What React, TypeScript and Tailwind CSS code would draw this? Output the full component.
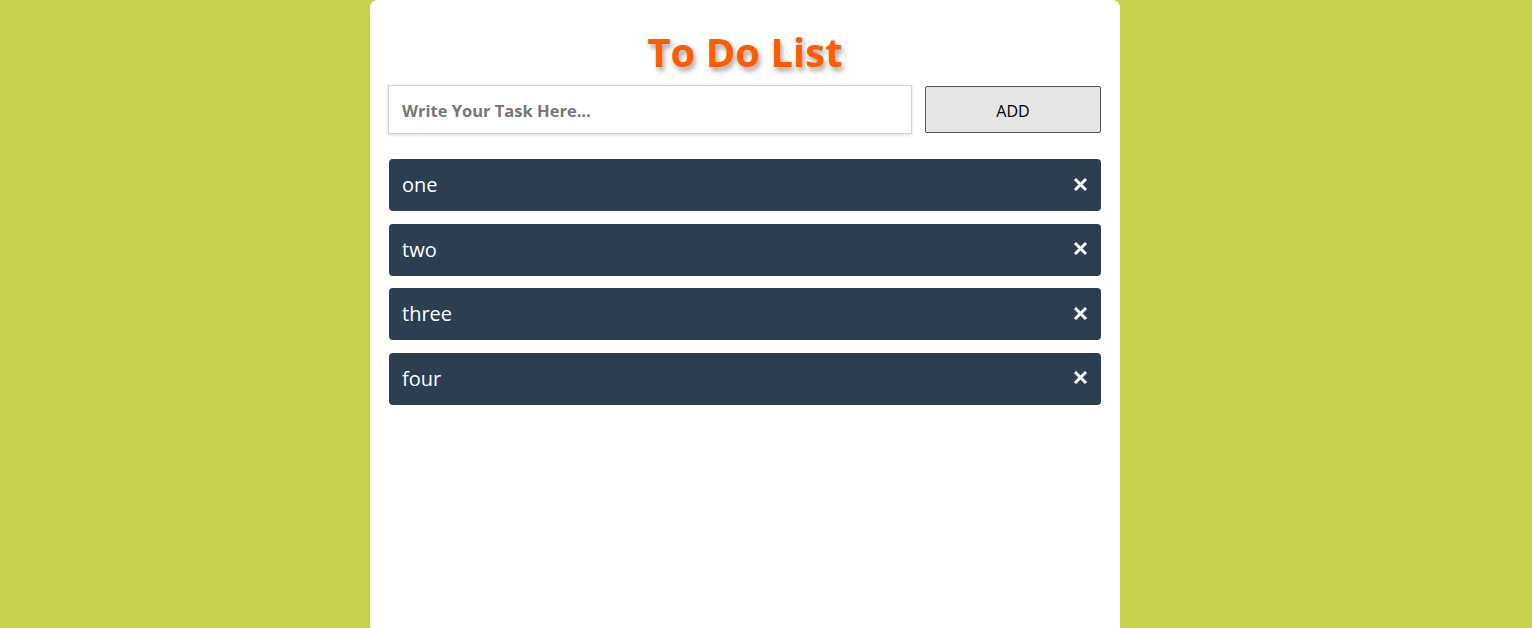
import React from "react";

const items = ["one", "two", "three", "four"];

function XIcon() {
  return (
    <svg width="15" height="15" viewBox="0 0 15 15" className="block -mt-[2px]">
      <path d="M2 2 L13 13 M13 2 L2 13" stroke="white" strokeWidth="3" strokeLinecap="butt" />
    </svg>
  );
}

export default function App() {
  return (
    <div className="min-h-[628px] h-[628px] w-full bg-[#c8d14f] flex justify-center pr-[42px] overflow-hidden" style={{ fontFamily: '"Open Sans", sans-serif' }}>
      <div className="w-[750px] shrink-0 bg-white rounded-t-lg px-[18px] pt-[25px]">
        <h1 className="text-center text-[40px] font-bold leading-[54px] text-[#ff5c00] [text-shadow:2px_4px_5px_rgba(0,0,0,0.35)]">
          To Do List
        </h1>
        <div className="flex items-center gap-[13px] mt-[6px]">
          <input
            autoFocus
            className="w-[524px] h-[49px] border border-[#d4d4d4] shadow-[0_1px_3px_rgba(0,0,0,0.15)] px-[13px] pt-[1px] text-[16.5px] font-bold text-[#333] caret-black placeholder:text-[#777] outline-none"
            placeholder="Write Your Task Here..."
          />
          <button className="w-[176px] h-[47px] bg-[#e5e5e5] border border-[#555] rounded-[2px] text-[16px] text-black pt-[2px]">
            ADD
          </button>
        </div>
        <ul className="mt-[25px] flex flex-col gap-[12.67px] pl-[1px] w-[713px]">
          {items.map((t) => (
            <li key={t} className="h-[52px] bg-[#2d3e50] rounded-[4px] flex items-center justify-between pl-[13px] pr-[13px] text-white text-[20px]">
              <span>{t}</span>
              <XIcon />
            </li>
          ))}
        </ul>
      </div>
    </div>
  );
}
